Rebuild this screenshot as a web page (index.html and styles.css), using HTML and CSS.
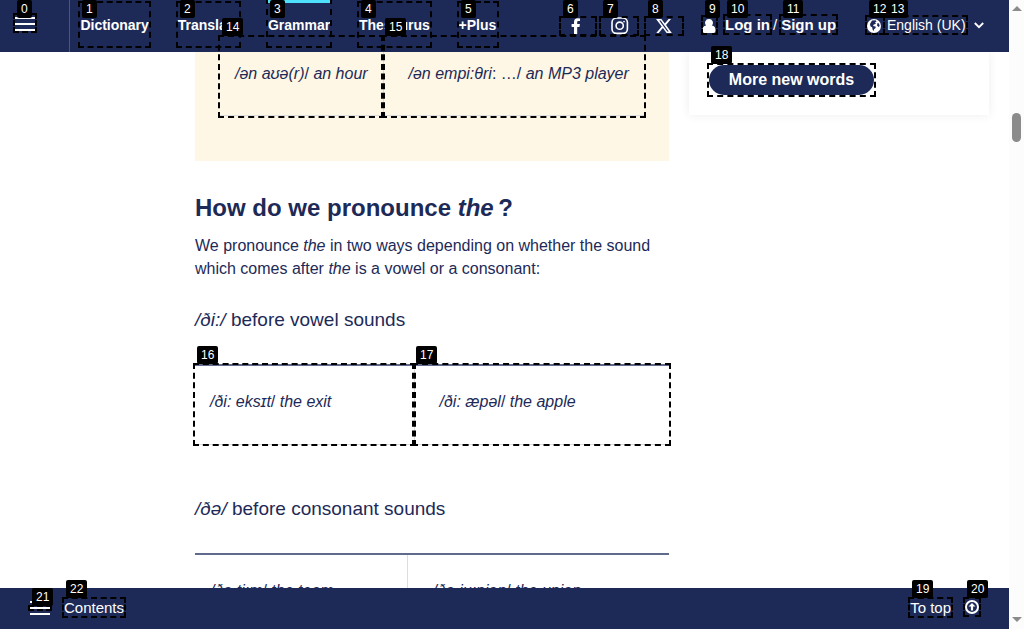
FILE: index.html
```html
<!DOCTYPE html>
<html lang="en">
<head>
<meta charset="utf-8">
<title>Grammar</title>
<link rel="stylesheet" href="styles.css">
</head>
<body>
<div class="app">
  <header class="topbar">
    <div class="menu"><div class="burger"><i></i><i></i><i></i></div></div>
    <nav class="nav">
      <a>Dictionary</a><a>Translate</a><a class="active">Grammar</a><a>Thesaurus</a><a>+Plus</a>
    </nav>
    <div class="social">
      <svg width="10" height="16" viewBox="0 0 10 16"><path fill="#fff" d="M3 16V9H.6V6H3V4C3 1.500 4.300.2 6.700.2L9 .4V3H7.600C6.600 3 6.200 3.500 6.200 4.300V6H8.900L8.500 9H6.200V16Z"/></svg>
      <svg width="18" height="18" viewBox="0 0 18 18" fill="none" stroke="#fff" stroke-width="1.600"><rect x="1" y="1" width="15.400" height="15.400" rx="4.400"/><circle cx="8.700" cy="8.700" r="3.600"/><circle cx="13" cy="4.700" r=".5" stroke-width="1"/></svg>
      <svg width="16" height="14" viewBox="0 0 16 14"><path fill="#fff" fill-rule="evenodd" d="M0 0H5.400L8.800 4.500 12.600 0H15L10 5.900 15.800 14H10.600L6.900 9 2.700 14H.3L5.700 7.500ZM3.200 1.500 11.300 12.500H12.700L4.700 1.500Z"/></svg>
    </div>
    <div class="account">
      <svg width="14" height="14" viewBox="0 0 14 14"><path fill="#fff" d="M7 0A3.800 3.800 0 0 1 9.900 6.400C12.500 6.500 13.500 8.500 13.500 11.500Q13.500 14 11.500 14H2.500Q.5 14 .5 11.500C.5 8.500 1.500 6.500 4.100 6.400A3.800 3.800 0 0 1 7 0Z"/></svg>
      <b>Log in</b><span>/</span><b>Sign up</b>
    </div>
    <div class="language">
      <svg width="14" height="14" viewBox="0 0 14 14"><circle cx="7" cy="7" r="7" fill="#fff"/><path fill="#1d2a57" d="M5 1.500 8.500 1.300 9.500 2.500 8 3.600 9 4.800 6.800 5.500 6 7 8.500 7.600 8.700 9 7 10.200 6.700 12 5.500 10.500 5.300 8.500 3.400 7.200 3 5ZM10.500 4 12 4.500 12.700 7 11.500 8 10 6.500Z"/></svg>
      <span>English (UK)</span>
      <svg class="chevron" width="10" height="7" viewBox="0 0 10 7"><path d="M.8 1 5 5.200 9.200 1" fill="none" stroke="#fff" stroke-width="1.800"/></svg>
    </div>
  </header>
  <main class="main">
    <article class="article">
      <div class="callout">
        <div class="row row-a"><div><em>/ən aʊə(r)</em>/ <em>an hour</em></div><div><em>/ən empi:θri</em>: …/ <em>an MP3 player</em></div></div>
      </div>
      <h2>How do we pronounce <em>the</em><span class="query"> ?</span></h2>
      <p>We pronounce <em>the</em> in two ways depending on whether the sound which comes after <em>the</em> is a vowel or a consonant:</p>
      <h3><em>/ði:/</em> before vowel sounds</h3>
      <div class="row row-b"><div><em>/ði: eksɪt</em>/ <em>the exit</em></div><div><em>/ði: æpəl</em>/ <em>the apple</em></div></div>
      <h3 class="second"><em>/ðə/</em> before consonant sounds</h3>
      <div class="row row-c"><div><em>/ðə ti:m</em>/ <em>the team</em></div><div><em>/ðə ju:niən</em>/ <em>the union</em></div></div>
    </article>
    <aside class="words"><a>More new words</a></aside>
  </main>
  <footer class="bottombar">
    <div class="burger"><i></i><i></i><i></i></div>
    <span class="contents">Contents</span>
    <span>To top</span>
    <svg width="14" height="14" viewBox="0 0 14 14"><circle cx="7" cy="7" r="6" fill="none" stroke="#fff" stroke-width="2"/><path fill="#fff" d="M7 2.900 10.500 6.600H8.100V10.500H5.900V6.600H3.500Z"/></svg>
  </footer>
</div>
<div class="scrollbar"><i class="up"></i><i class="thumb"></i><i class="down"></i></div>
<div class="marks" id="marks"></div>
<script src="marks.js"></script>
</body>
</html>
```
FILE: styles.css
```css
* { box-sizing: border-box; }
body { margin: 0; width: 1024px; height: 629px; overflow: hidden; display: flex; position: relative; background: #fff; color: #1d2a57; font: 16px/23px "Liberation Sans", Arial, sans-serif; }
.app { width: 1009px; height: 629px; display: flex; flex-direction: column; }
.topbar { height: 52px; flex: none; background: #1d2a57; color: #fff; display: flex; align-items: center; font-size: 14px; line-height: 18px; }
.topbar svg, .bottombar svg { display: block; flex: none; }
.menu { width: 70px; height: 52px; border-right: 1px solid #4a557a; padding: 17px 0 0 15px; flex: none; }
.burger { width: 20px; height: 14px; display: flex; flex-direction: column; justify-content: space-between; }
.burger i { height: 2px; background: #fff; }
.nav { display: flex; gap: 28.8px; margin-left: 10.4px; width: 488.6px; height: 52px; font-weight: bold; flex: none; }
.nav a { padding-top: 16px; height: 52px; }
.nav .active { border-top: 3px solid #4fe0fb; padding-top: 13px; }
.social { display: flex; align-items: center; width: 133px; flex: none; }
.social svg:nth-child(1) { margin-left: 2px; }
.social svg:nth-child(2) { margin-left: 30px; }
.social svg:nth-child(3) { margin-left: 27px; }
.account { display: flex; align-items: center; font-size: 15px; width: 165px; flex: none; }
.account b:nth-of-type(1) { margin-left: 9px; }
.account span { margin: 0 4px 0 3px; }
.account b, .account span, .language span { padding-bottom: 2px; }
.language { display: flex; align-items: center; }
.language span { margin: 0 8px 0 6px; white-space: nowrap; }
.language .chevron { margin-bottom: 1px; }
.main { height: 536px; overflow: hidden; display: flex; align-items: flex-start; padding-left: 195px; gap: 20px; flex: none; }
.article { width: 474px; flex: none; }
.callout { background: #fff7e5; height: 109px; padding: 0 25px; }
.row { display: grid; }
.row > div { padding-left: 15px; white-space: nowrap; border-bottom: 1px solid #ddd; }
.row > div + div { padding-left: 24.5px; border-left: 1px solid #ddd; }
.row-a { grid-template-columns: 163px 261px; height: 64px; }
.row-a > div { padding-top: 10px; }
.row-b, .row-c { border-top: 2px solid #606a8c; height: 81px; }
.row-b { grid-template-columns: 219px 255px; }
.row-c { grid-template-columns: 212px 262px; }
.row-b > div, .row-c > div { padding-top: 24px; }
h2 { font-size: 24px; line-height: 30px; margin: 32px 0 11px; }
.query { margin-left: -2px; }
p { margin: 0; }
h3 { font-size: 19px; font-weight: normal; line-height: 24px; margin: 28px 0 32px; }
h3.second { margin: 52px 0 32px; }
.words { width: 300px; height: 63px; background: #fff; box-shadow: 0 0 10px rgba(0,0,0,.07); padding: 13px 20px; }
.words a { display: block; width: 165px; height: 30px; border-radius: 15px; background: #1d2a57; color: #fff; font-weight: bold; line-height: 29px; text-align: center; }
.bottombar { height: 41px; flex: none; background: #1d2a57; color: #fff; display: flex; align-items: flex-start; padding: 10px 30px 0; font-size: 15px; line-height: 20px; }
.bottombar .burger { margin-top: 3px; }
.bottombar .contents { margin: 0 auto 0 14px; }
.bottombar svg { margin: 2px 0 0 14px; }
.scrollbar { width: 15px; height: 629px; background: #fcfcfc; display: flex; flex-direction: column; align-items: center; }
.scrollbar i { display: block; }
.up { border: 5px solid transparent; border-top: 0; border-bottom: 5px solid #8b8b8b; margin-top: 6px; }
.thumb { width: 9px; height: 29px; border-radius: 5px; background: #8b8b8b; margin-top: 102px; }
.down { border: 5px solid transparent; border-bottom: 0; border-top: 5px solid #8b8b8b; margin: auto 0 7px; }
.marks { position: absolute; inset: 0; }
.mark { position: absolute; border: 2px dashed #000; }
.tag { position: absolute; height: 18px; padding: 0 4px; border-radius: 2px; background: #000; color: #fff; font-size: 12px; line-height: 18px; }
```
FILE: marks.js
```javascript
// Each entry: left, top, right, bottom of an outlined element.
const boxes = [
  [13,13,37,33],[78,1,151,48],[176,1,241,48],[266,-2,332,48],[357,1,432,48],[457,1,499,48],
  [559,16,597,36],[599,16,639,36],[644,16,684,36],[701,15,718,35],[723,14,772,35],[779,14,838,35],
  [865,15,885,35],[883,15,968,35],[218,35,385,118],[381,35,646,118],[193,363,416,446],[412,363,671,446],
  [707,63,876,97],[908,597,953,618],[963,597,981,617],[28,605,52,611],[62,597,126,618]
];
const layer = document.getElementById("marks");
const add = (name, x, y) => {
  const el = document.createElement("div");
  el.className = name;
  el.style.left = x + "px";
  el.style.top = y + "px";
  layer.append(el);
  return el;
};
boxes.forEach(([l, t, r, b]) => {
  const el = add("mark", l, t);
  el.style.width = r - l + "px";
  el.style.height = b - t + "px";
});
boxes.forEach(([l, t], i) => {
  add("tag", l + 4, Math.max(0, t - 17)).textContent = i;
});
```
